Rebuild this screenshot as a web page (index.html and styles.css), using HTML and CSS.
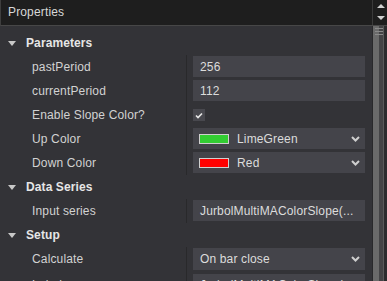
FILE: index.html
```html
<!DOCTYPE html>
<html>
<head>
<meta charset="utf-8">
<link rel="stylesheet" href="styles.css">
</head>
<body>
<div class="panel">
  <div class="header">
    <div class="title">Properties</div>
    <div class="hscroll">
      <span class="arrow up"></span>
      <span class="arrow down"></span>
    </div>
  </div>
  <div class="main">
    <div class="grid">
      <div class="cat"><span class="tri"></span>Parameters</div>
      <div class="prop"><div class="label">pastPeriod</div><div class="val"><div class="box">256</div></div></div>
      <div class="prop"><div class="label">currentPeriod</div><div class="val"><div class="box">112</div></div></div>
      <div class="prop"><div class="label">Enable Slope Color?</div><div class="val"><div class="check"><svg width="8" height="7" viewBox="0 0 8 7"><path d="M1 3.5 L3 5.5 L7 1.5" fill="none" stroke="#e8e8e8" stroke-width="1.6"/></svg></div></div></div>
      <div class="prop"><div class="label">Up Color</div><div class="val"><div class="box combo"><span class="swatch lime"></span><span class="ctext">LimeGreen</span><svg class="chev" width="9" height="6" viewBox="0 0 9 6"><path d="M1 1 L4.5 4.5 L8 1" fill="none" stroke="#cfcfcf" stroke-width="2"/></svg></div></div></div>
      <div class="prop"><div class="label">Down Color</div><div class="val"><div class="box combo"><span class="swatch red"></span><span class="ctext">Red</span><svg class="chev" width="9" height="6" viewBox="0 0 9 6"><path d="M1 1 L4.5 4.5 L8 1" fill="none" stroke="#cfcfcf" stroke-width="2"/></svg></div></div></div>
      <div class="cat"><span class="tri"></span>Data Series</div>
      <div class="prop"><div class="label">Input series</div><div class="val"><div class="box">JurbolMultiMAColorSlope(...</div></div></div>
      <div class="cat"><span class="tri"></span>Setup</div>
      <div class="prop tall"><div class="label">Calculate</div><div class="val"><div class="box combo"><span class="ctext plain">On bar close</span><svg class="chev" width="9" height="6" viewBox="0 0 9 6"><path d="M1 1 L4.5 4.5 L8 1" fill="none" stroke="#cfcfcf" stroke-width="2"/></svg></div></div></div>
      <div class="prop"><div class="label">Label</div><div class="val"><div class="box">JurbolMultiMAColorSlope(...</div></div></div>
    </div>
    <div class="vscroll">
      <div class="thumb">
        <span class="grip"></span>
      </div>
      <div class="track"></div>
      <div class="edge"></div>
    </div>
  </div>
</div>
</body>
</html>
```

FILE: styles.css
```css
html, body {
  margin: 0;
  padding: 0;
  background: #333337;
  overflow: hidden;
}

.panel {
  width: 387px;
  height: 281px;
  display: flex;
  flex-direction: column;
  font-family: "Liberation Sans", Arial, sans-serif;
  font-size: 12px;
  letter-spacing: 0.15px;
  color: #d2d2d2;
  overflow: hidden;
}

.header {
  height: 25px;
  flex: none;
  display: flex;
  background: #1e1e1e;
  border-bottom: 1px solid #474747;
  border-left: 1px solid #3e3e3e;
}

.title {
  flex: 1;
  padding-left: 7px;
  line-height: 24px;
  color: #d8d8d8;
}

.hscroll {
  width: 14px;
  border-left: 1px solid #3a3a3a;
  display: flex;
  flex-direction: column;
  align-items: center;
  padding-top: 4px;
  gap: 8px;
}

.arrow {
  width: 0;
  height: 0;
  border-left: 4px solid transparent;
  border-right: 4px solid transparent;
  margin-left: 1px;
}

.arrow.up { border-bottom: 4px solid #d0d0d0; }
.arrow.down { border-top: 4px solid #d0d0d0; }

.main {
  flex: 1;
  display: flex;
  min-height: 0;
}

.grid {
  flex: 1;
  padding-top: 5px;
  overflow: hidden;
}

.cat {
  height: 24px;
  display: flex;
  align-items: center;
  font-weight: bold;
  color: #e6e6e6;
  letter-spacing: 0.1px;
}

.tri {
  width: 0;
  height: 0;
  border-left: 4px solid transparent;
  border-right: 4px solid transparent;
  border-top: 5px solid #c8c8c8;
  margin-left: 8px;
  margin-right: 10px;
}

.prop {
  height: 24px;
  display: flex;
}

.prop.tall {
  height: 26px;
}

.label {
  width: 154px;
  padding-left: 32px;
  border-right: 1px solid #29292b;
  line-height: 24px;
  white-space: nowrap;
}

.val {
  flex: 1;
  padding: 1px 7px 2px 6px;
  display: flex;
  align-items: flex-start;
}

.box {
  flex: 1;
  height: 21px;
  background: #44444a;
  display: flex;
  align-items: center;
  padding-left: 7px;
  color: #dcdcdc;
  white-space: nowrap;
  overflow: hidden;
}

.tall .box {
  height: 22px;
}

.check {
  width: 12px;
  height: 12px;
  background: #48484e;
  display: flex;
  align-items: center;
  justify-content: center;
  margin-top: 5px;
}

.combo {
  padding-left: 6px;
  padding-right: 5px;
}

.swatch {
  width: 28px;
  height: 8px;
  border: 1px solid #cfcfcf;
  margin-right: 8px;
  flex: none;
}

.swatch.lime { background: #32cd32; }
.swatch.red { background: #ff0000; }

.ctext { flex: 1; }
.ctext.plain { padding-left: 1px; }

.chev { flex: none; }

.vscroll {
  width: 15px;
  display: flex;
  border-left: 1px solid #29292b;
  flex: none;
  box-sizing: border-box;
}

.thumb {
  width: 6px;
  background: #6a6a6a;
  position: relative;
}

.grip {
  position: absolute;
  left: 2px;
  top: 2px;
  width: 8px;
  height: 5px;
  border-top: 1px solid #8a8a8a;
  border-bottom: 1px solid #8a8a8a;
  z-index: 1;
}

.grip::after {
  content: "";
  position: absolute;
  left: 0;
  right: 0;
  top: 2px;
  border-top: 1px solid #8a8a8a;
}

.track {
  width: 4px;
  background: #444446;
}

.edge {
  flex: 1;
  background: #2c2c2e;
  border-left: 1px solid #5a5a5a;
}
```
